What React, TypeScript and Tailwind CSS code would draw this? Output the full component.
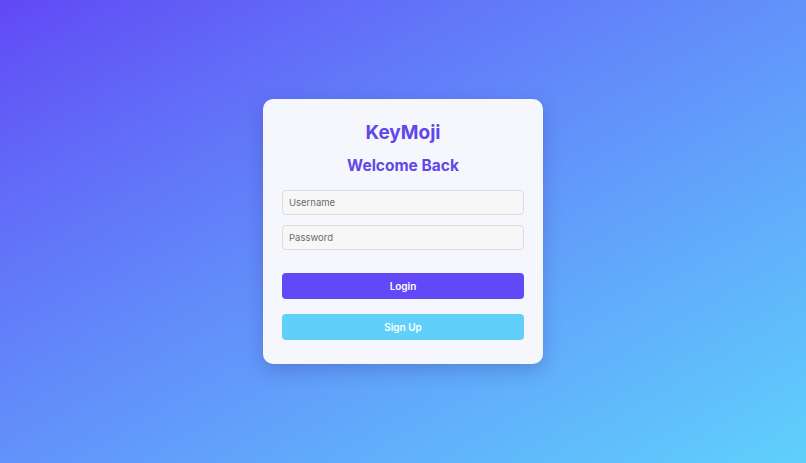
import React from "react";

export default function App() {
  return (
    <div
      className="flex h-[463px] w-full items-center justify-center bg-gradient-to-br from-[#6148f5] to-[#5fd0fb]"
      style={{ fontFamily: '"Inter", "Open Sans", sans-serif' }}
    >
      <div className="flex w-[280px] flex-col rounded-[10px] bg-[#f5f7fc] px-[19px] pt-[20px] pb-[24px] shadow-[0_6px_18px_rgba(40,40,120,0.25)]">
        <h1 className="text-center text-[19px] font-bold leading-[28px] text-[#6147e8]">KeyMoji</h1>
        <h2 className="mt-[8px] text-center text-[15.5px] font-bold leading-[22px] text-[#6147e8]">Welcome Back</h2>
        <input
          className="mt-[13px] h-[25px] w-full rounded-[4px] border border-[#dcdde2] bg-[#f7f7f8] px-[6px] text-[9.5px] text-[#555] outline-none placeholder:text-[#6b6b6b]"
          placeholder="Username"
        />
        <input
          type="password"
          className="mt-[10px] h-[25px] w-full rounded-[4px] border border-[#dcdde2] bg-[#f7f7f8] px-[6px] text-[9.5px] text-[#555] outline-none placeholder:text-[#6b6b6b]"
          placeholder="Password"
        />
        <button className="mt-[23px] h-[26px] w-full rounded-[4px] bg-[#6248f6] text-[10px] font-semibold text-white">
          Login
        </button>
        <button className="mt-[15px] h-[26px] w-full rounded-[4px] bg-[#60d0fb] text-[10px] font-semibold text-white">
          Sign Up
        </button>
      </div>
    </div>
  );
}
